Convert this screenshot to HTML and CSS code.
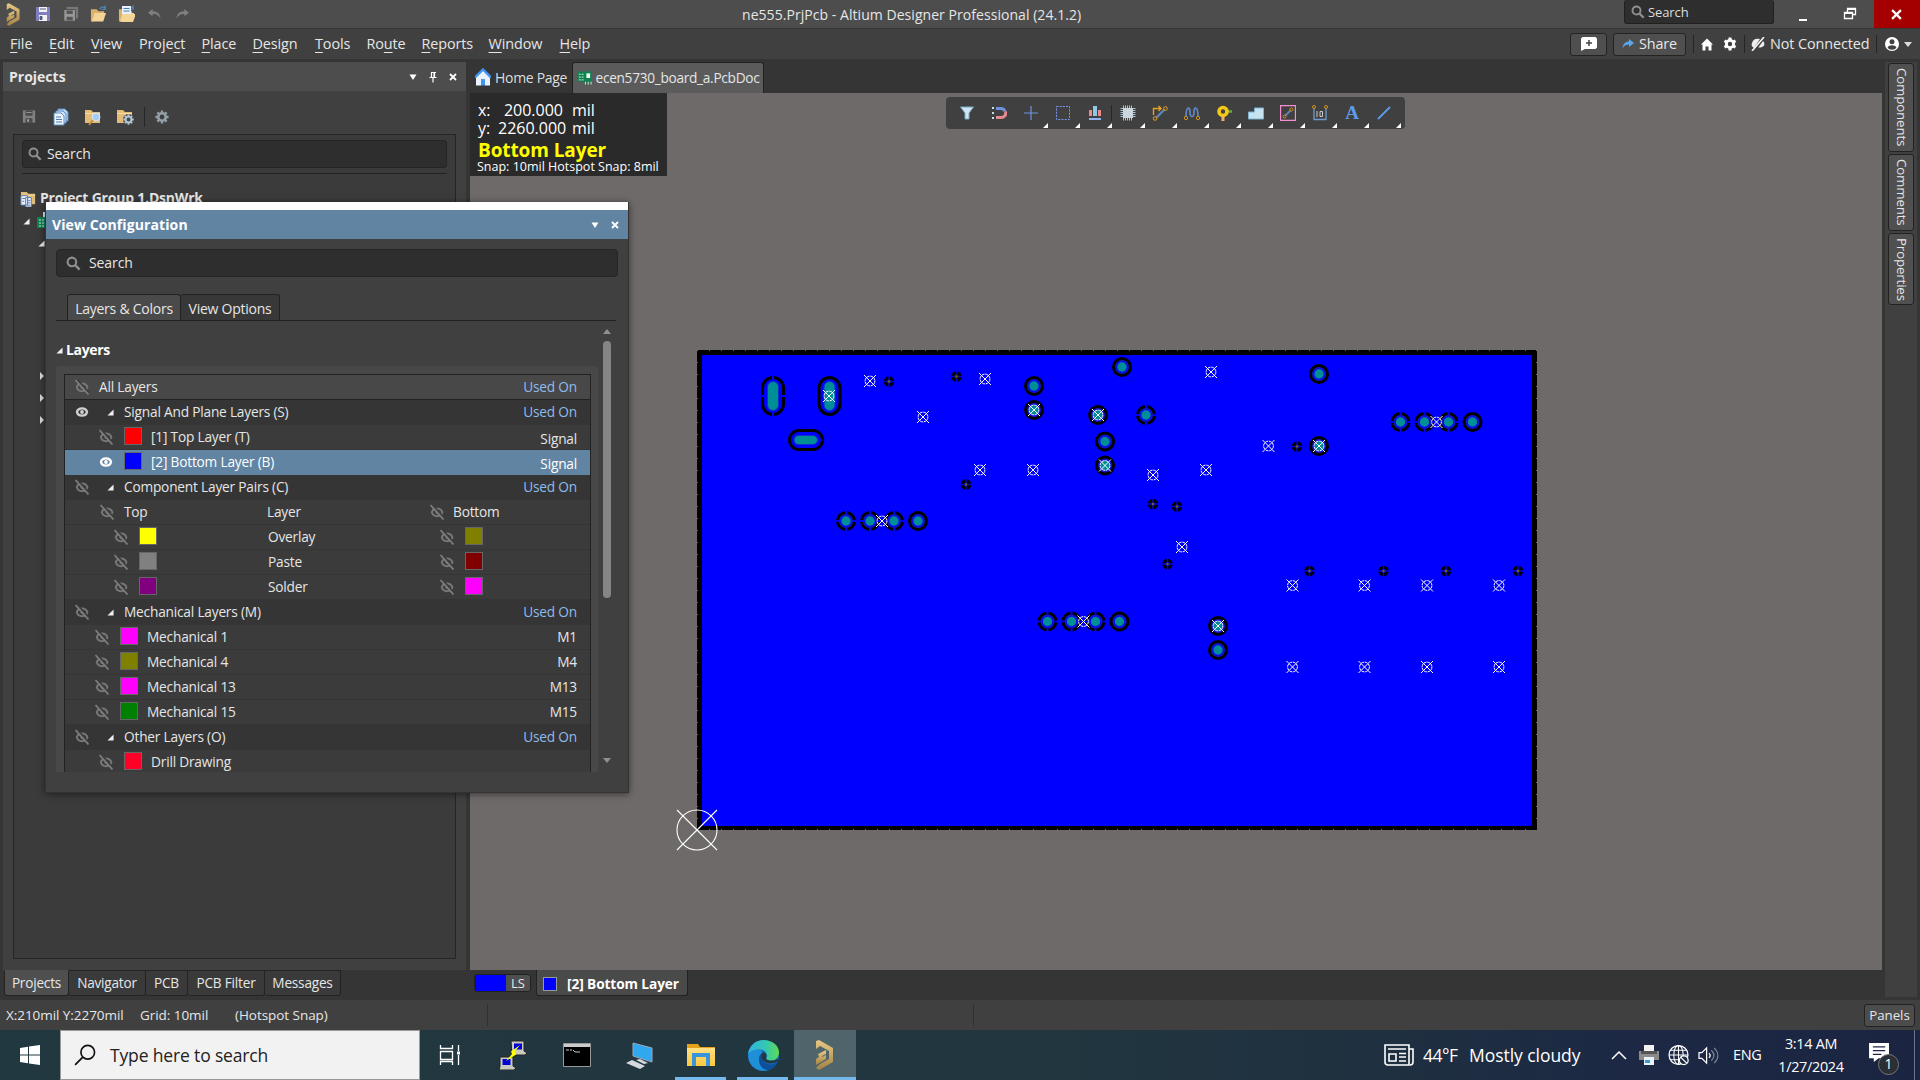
FILE: index.html
```html
<!DOCTYPE html>
<html lang="en">
<head>
<meta charset="utf-8">
<title>ne555.PrjPcb - Altium Designer Professional (24.1.2)</title>
<link rel="stylesheet" href="styles.css">
</head>
<body>
<svg class="defs" width="0" height="0">
  <defs>
    <linearGradient id="gold" x1="0" y1="0" x2="0" y2="1"><stop offset="0" stop-color="#e6c883"/><stop offset="1" stop-color="#a58344"/></linearGradient>
    <linearGradient id="edgeA" x1="0" y1="0" x2="1" y2="0"><stop offset="0" stop-color="#2fb4e0"/><stop offset=".6" stop-color="#35c8b0"/><stop offset="1" stop-color="#63dc4c"/></linearGradient>
    <linearGradient id="folderG" x1="0" y1="0" x2="0" y2="1"><stop offset="0" stop-color="#ffe084"/><stop offset="1" stop-color="#fcc83e"/></linearGradient>
    <symbol id="altium" viewBox="0 0 20 30"><path d="M1 1 4 0 18 8v14L4 30 1 28l4-4 9-5v-8L5 6 1 9z" fill="url(#gold)"/><path d="M3 14 11 10v4l-4 2v1l4-2v4L1 25v-6l3-2z" fill="url(#gold)"/></symbol>
    <symbol id="floppy" viewBox="0 0 16 16"><path d="M1 1h14v14H1z" fill="currentColor"/><path d="M4 1h8v5H4zM4 9h8v6H4z" fill="#f2f2f8"/><path d="M5 3h6M5 10.5h2v3H5z" stroke="#555a78" fill="#555a78"/></symbol>
    <symbol id="floppyoff" viewBox="0 0 16 16"><path d="M1 1h14v14H1z" fill="#808080"/><path d="M4 1h8v6H4zM4 10h8v5H4z" fill="#4a4a4a"/><path d="M5 3h6v1H5zM6 11h2v3H6z" fill="#aaa"/></symbol>
    <symbol id="folder" viewBox="0 0 18 18"><path d="M1 4h6l2 2h6v3H6l-3 8H1z" fill="#d9b26b"/><path d="M5 8h12l-3 9H2z" fill="#f5d596"/><path d="M10 4c2-3 4-3 6-1M16 0v4h-4" fill="none" stroke="#4b90c8" stroke-width="1.2"/></symbol>
    <symbol id="folderc" viewBox="0 0 18 18"><path d="M1 2h6l2 2h7v11H1z" fill="#e0bc78"/><path d="M1 5h15v1H1z" fill="#f7dca3"/></symbol>
    <symbol id="gear" viewBox="0 0 16 16"><path d="M8 .5V4m0 8v3.500M.5 8H4m8 0h3.500M2.700 2.700l2.400 2.400m5.800 5.800 2.400 2.400M13.300 2.700l-2.400 2.400m-5.800 5.800-2.400 2.400" stroke="currentColor" stroke-width="2.600"/><circle cx="8" cy="8" r="4.300" fill="none" stroke="currentColor" stroke-width="3"/></symbol>
    <symbol id="glass" viewBox="0 0 16 16"><circle cx="6.3" cy="6.3" r="4.6" fill="none" stroke="#8f8f8f" stroke-width="2.2"/><path d="m9.8 9.8 4.7 4.7" stroke="#8f8f8f" stroke-width="2.6"/></symbol>
    <symbol id="hid" viewBox="0 0 14 16"><path d="M1.800 8.300c1.500-5.200 9-5.200 10.600 0-1.600 5.200-9 5.200-10.600 0z" fill="none" stroke="#777" stroke-width="2"/><circle cx="7.500" cy="8.300" r="1.900" fill="#777"/><path d="M2 .5 14 14" stroke="#3b3b3b" stroke-width="2"/><path d="M.5 1 13.500 15.500" stroke="#7d7d7d" stroke-width="1.800"/></symbol>
    <symbol id="eye" viewBox="0 0 14 16"><path d="M2 8C3 3.200 11 3.200 12 8 11 12.800 3 12.800 2 8z" fill="none" stroke="currentColor" stroke-width="2.400"/><circle cx="7" cy="8" r="1.900" fill="currentColor"/></symbol>
    <symbol id="open" viewBox="0 0 8 8"><path d="M7.500.5v7h-7z" fill="#eee"/></symbol>
    <symbol id="closed" viewBox="0 0 6 10"><path d="M1 1v8l4-4z" fill="#ddd"/></symbol>
    <symbol id="pcb" viewBox="0 0 16 14"><path d="M0 0h16v11h-2v3h-1v-3h-2v3h-1v-3H0z" fill="#0d8350"/><path d="M2 3h2m-2 3h2m-2 3h2M5 3h2M5 6h2M5 9h2" stroke="#d7efe1" /><path d="M10 2h4v5h-4z" fill="#e8f5ee"/><path d="M9 11v3m3-3v3m3-3v3" stroke="#d7efe1"/></symbol>
    <symbol id="x" viewBox="0 0 10 10"><path d="m2 2 6 6m0-6-6 6" stroke="#fff" stroke-width="1.800"/></symbol>
    <symbol id="down" viewBox="0 0 10 10"><path d="M1.500 2.500h7L5 8z" fill="#fff"/></symbol>
    <g id="ring"><circle r="6.500" fill="none" stroke="#1515d0" stroke-width="2"/><circle r="8.500" fill="none" stroke="#000" stroke-width="3"/><circle r="4.700" fill="#008e96"/></g>
    <g id="therm"><use href="#ring"/><path d="M0-11v4M0 7v4M-11 0h4M7 0h4" stroke="#00f" stroke-width="2"/></g>
    <g id="mark"><path d="m-6-6 12 12M6-6-6 6" stroke="#fff" stroke-width="1"/><circle r="4.900" fill="none" stroke="#fff" stroke-width="1" stroke-dasharray="3 .8"/></g>
    <g id="via"><circle r="3.700" fill="none" stroke="#000" stroke-width="3.200"/><path d="M0-6v12M-6 0h12" stroke="#00f" stroke-width="1.300"/><path d="M-2.500 0h5M0-2.500v5" stroke="#223"/><path d="M-1-1h2v2h-2z" fill="#7a5a28"/></g>
  </defs>
</svg>

<header class="titlebar">
  <div class="quick">
    <svg class="q-logo"><use href="#altium"/></svg>
    <svg class="q-save"><use href="#floppy"/></svg>
    <svg class="q-all" viewBox="0 0 18 18"><path d="M4 1h13v13H4z" fill="#777"/><path d="M1 4h13v13H1z" fill="#999" stroke="#4c4c4c"/><path d="M4 5h7v4H4zM4 12h7v4H4z" fill="#555"/></svg>
    <svg class="q-open"><use href="#folder"/></svg>
    <svg class="q-open"><use href="#folder"/><path d="M4 1h9v8H4z" fill="#e8f0fa"/><path d="M5.500 3.500h6m-6 2.500h6" stroke="#4a7fb5"/><path d="M6 9h12l-3 8H3z" fill="#f5d596"/></svg>
    <svg class="q-undo" viewBox="0 0 16 14"><path d="M6 1 1 5l5 4V6.500c4-.5 6 1 8.500 5C14 6 11 3.500 6 3.500z" fill="#7f7f7f"/></svg>
    <svg class="q-undo" viewBox="0 0 16 14"><path d="m10 1 5 4-5 4V6.500c-4-.5-6 1-8.500 5C2 6 5 3.500 10 3.500z" fill="#7f7f7f"/></svg>
  </div>
  <div class="title">ne555.PrjPcb - Altium Designer Professional (24.1.2)</div>
  <div class="topsearch"><svg><use href="#glass"/></svg><span>Search</span></div>
  <div class="winbtns">
    <svg class="min" viewBox="0 0 10 10"><path d="M1 8h8" stroke="#fff" stroke-width="2"/></svg>
    <svg class="restore" viewBox="0 0 14 14"><path d="M4.500 5V1.500h8v6H9.500M1.500 5.500h8v6h-8z" fill="none" stroke="#fff" stroke-width="1.300"/><path d="M4 2h9M1 6h9" stroke="#fff" stroke-width="2"/></svg>
    <span class="close"><svg viewBox="0 0 10 10"><path d="m1 1 8 8m0-8L1 9" stroke="#fff" stroke-width="2"/></svg></span>
  </div>
</header>

<nav class="menubar">
  <div class="menus">
    <span class="m39"><u>F</u>ile</span><span class="m42"><u>E</u>dit</span><span class="m48"><u>V</u>iew</span><span class="m62">Proje<u>c</u>t</span><span class="m51"><u>P</u>lace</span><span class="m62"><u>D</u>esign</span><span class="m52"><u>T</u>ools</span><span class="m55">Ro<u>u</u>te</span><span class="m67"><u>R</u>eports</span><span class="m71"><u>W</u>indow</span><span><u>H</u>elp</span>
  </div>
  <div class="account">
    <span class="btn note"><svg viewBox="0 0 16 14"><path d="M1.500 0h13L16 1.500v9L14.500 12H4l-4 2V1.500z" fill="#fff"/><path d="M8 3v6M5 6h6" stroke="#444" stroke-width="1.500"/></svg></span>
    <span class="btn share"><svg viewBox="0 0 12 10"><path d="m7 0 5 4-5 4V5.500C4 5.300 2 6.500.5 9.500 1 5 3 2.800 7 2.500z" fill="#5aa9f0"/></svg>Share</span>
    <i></i>
    <svg class="home" viewBox="0 0 12 12"><path d="M6 0 0 6h1.500v6h3V8h3v4h3V6H12z" fill="#fff"/></svg>
    <svg class="cog" viewBox="0 0 14 14"><path d="M7 .5V3m0 8v2.500M1.500 3.700l2.200 1.300m6.600 4 2.200 1.300m0-6.600L10.300 5m-6.600 4-2.200 1.300" stroke="#fff" stroke-width="3"/><circle cx="7" cy="7" r="3.600" fill="none" stroke="#fff" stroke-width="2.800"/></svg>
    <i></i>
    <svg class="plug" viewBox="0 0 14 14"><path d="M1 6c1-4 4-5 8-4L3 11C1 10 0 8 1 6zM12 4c2 2 2 5-1 6-2 1-4 0-4 1z" fill="#eee"/><path d="M1 14 13 0" stroke="#fff" stroke-width="1.500"/></svg>
    <span class="conn">Not Connected</span>
    <i></i>
    <svg class="user" viewBox="0 0 14 14"><circle cx="7" cy="7" r="7" fill="#fff"/><circle cx="7" cy="4.800" r="2.500" fill="#404040"/><path d="M2.500 10.500c1.500-3 7.500-3 9 0-2 3-7 3-9 0z" fill="#404040"/></svg>
    <svg class="caret" viewBox="0 0 8 5"><path d="M0 0h8L4 5z" fill="#ddd"/></svg>
  </div>
</nav>

<main class="workspace">
  <section class="left">
    <div class="panel">
      <div class="panelhead"><b>Projects</b><svg><use href="#down"/></svg><svg viewBox="0 0 10 12"><path d="M3 1.500h5M3.500 1v5m3-5v5M1.500 6.500h7M5 7v4.500M6 1v5" stroke="#fff" stroke-width="1.200"/></svg><svg><use href="#x"/></svg></div>
      <div class="ptools">
        <svg class="pt1"><use href="#floppyoff"/></svg>
        <svg viewBox="0 0 18 18"><path d="M6 1h7l3 3v9H6z" fill="#b9d4f0" stroke="#5d8fc4"/><path d="M4 3h7l3 3v9H4z" fill="#cfe2f5" stroke="#5d8fc4"/><path d="M2 5h7l3 3v9H2z" fill="#eef5fc" stroke="#5d8fc4"/><path d="M4 9h5m-5 2.500h6M4 14h6" stroke="#4a7fb5"/></svg>
        <svg viewBox="0 0 18 18"><use href="#folderc"/><circle cx="12" cy="9" r="4" fill="#a8cdee" stroke="#d8e8f6"/><path d="m9 12-4 5" stroke="#c98a3c" stroke-width="2"/></svg>
        <svg viewBox="0 0 18 18"><use href="#folderc"/><circle cx="12.500" cy="11.500" r="5.500" fill="#404a50"/><g transform="translate(7 6) scale(.69)" color="#b4c4ce"><path d="M8 .5V4m0 8v3.500M.5 8H4m8 0h3.500M2.700 2.700l2.400 2.400m5.800 5.800 2.400 2.400M13.300 2.700l-2.400 2.400m-5.800 5.800-2.400 2.400" stroke="currentColor" stroke-width="2.600"/><circle cx="8" cy="8" r="4.300" fill="none" stroke="currentColor" stroke-width="3"/></g></svg>
        <i></i>
        <svg class="pt5"><use href="#gear"/></svg>
      </div>
      <div class="pbox">
        <div class="field"><svg><use href="#glass"/></svg><span>Search</span></div>
        <hr>
        <div class="tree">
          <div class="trow group"><svg viewBox="0 0 18 18"><use href="#folderc"/><path d="M1 6h7v10H1zM6 8h6v10H6z" fill="#e6eefa" stroke="#5779b0"/><path d="M2.500 9h3m-3 3h2M8 11h3m-3 2.500h3M8 16h3" stroke="#5779b0"/></svg><b>Project Group 1.DsnWrk</b></div>
          <div class="trow prj"><svg class="ar"><use href="#open"/></svg><svg class="pi" viewBox="0 0 16 18"><path d="M6 0h9v9H6z" fill="#dfe6f2"/><svg y="4" width="16" height="14"><use href="#pcb"/></svg></svg></div>
          <div class="trow sub"><svg class="ar"><use href="#open"/></svg></div>
          <div class="trow fold first"><svg><use href="#closed"/></svg></div>
          <div class="trow fold"><svg><use href="#closed"/></svg></div>
          <div class="trow fold"><svg><use href="#closed"/></svg></div>
        </div>
      </div>
    </div>
    <div class="ptabs"><span class="on t64">Projects</span><span class="t77">Navigator</span><span class="t42">PCB</span><span class="t77">PCB Filter</span><span class="t76">Messages</span></div>
  </section>

  <section class="center">
    <div class="dtabs">
      <span class="dhome"><svg viewBox="0 0 16 18"><path d="M8 1 1 9v8h5v-6h4v6h5V9z" fill="#e9f2fd"/><path d="m0 9 8-8 8 8" fill="none" stroke="#3f93f2" stroke-width="2.400"/><path d="M6 11h4v6H6z" fill="#3f93f2"/></svg>Home Page</span>
      <span class="ddoc"><svg><use href="#pcb"/></svg>ecen5730_board_a.PcbDoc</span>
    </div>
    <div class="canvas">
      <svg class="board" viewBox="470 93 1412 877">
        <path d="M697 350h840v480H697z"/>
        <path d="M702 355h830v471H702z" fill="#00f"/>
        <path d="M697 350.500h840M697 829.500h840M697.500 350v480M1536.500 350v480" stroke="#6e6a69" stroke-dasharray="1 11"/>
        <g fill="none" stroke="#000" stroke-width="3">
          <rect x="762.500" y="377.500" width="21" height="37" rx="10.500"/><rect x="819" y="377.500" width="21" height="37" rx="10.500"/><rect x="789.500" y="430.500" width="33" height="19" rx="9.500"/>
        </g>
        <path d="M773 374v6M773 412v6M760 396h6M780 396h6" stroke="#00f" stroke-width="2"/>
        <g fill="#008e96" stroke="#0a30c8"><rect x="767.500" y="381.500" width="11" height="29" rx="5.500"/><rect x="824" y="381.500" width="11" height="29" rx="5.500"/><rect x="794" y="435.500" width="23.500" height="9" rx="4.500"/></g>
        <use href="#ring" x="1034" y="386"/><use href="#ring" x="1034" y="410"/><use href="#ring" x="1098" y="415"/><use href="#ring" x="1105" y="441.500"/><use href="#ring" x="1105" y="465.500"/><use href="#ring" x="1122" y="367"/><use href="#ring" x="1319" y="374"/><use href="#ring" x="1319" y="446"/><use href="#ring" x="1218" y="626"/><use href="#ring" x="1218" y="650"/><use href="#ring" x="1472.500" y="422"/><use href="#ring" x="918" y="521"/><use href="#ring" x="1119.500" y="621.500"/>
        <use href="#therm" x="1146" y="415"/><use href="#therm" x="1400.500" y="422"/><use href="#therm" x="1424.500" y="422"/><use href="#therm" x="1448.500" y="422"/><use href="#therm" x="846" y="521"/><use href="#therm" x="870" y="521"/><use href="#therm" x="894" y="521"/><use href="#therm" x="1047.500" y="621.500"/><use href="#therm" x="1071.500" y="621.500"/><use href="#therm" x="1095.500" y="621.500"/>
        <use href="#mark" x="1034" y="410"/><use href="#mark" x="1098" y="415"/><use href="#mark" x="1105" y="465.500"/><use href="#mark" x="1319" y="446"/><use href="#mark" x="1218" y="626"/><use href="#mark" x="829" y="396"/><use href="#mark" x="1436.500" y="422"/><use href="#mark" x="882" y="521"/><use href="#mark" x="1083.500" y="621.500"/>
        <use href="#mark" x="870" y="381"/><use href="#mark" x="985" y="379"/><use href="#mark" x="923" y="417"/><use href="#mark" x="980" y="470"/><use href="#mark" x="1033" y="470"/><use href="#mark" x="1211" y="372"/><use href="#mark" x="1268.500" y="446"/><use href="#mark" x="1153" y="475"/><use href="#mark" x="1206" y="470"/><use href="#mark" x="1182" y="547"/>
        <use href="#mark" x="1292.500" y="585.500"/><use href="#mark" x="1364.500" y="585.500"/><use href="#mark" x="1427" y="585.500"/><use href="#mark" x="1499" y="585.500"/><use href="#mark" x="1292.500" y="667"/><use href="#mark" x="1364.500" y="667"/><use href="#mark" x="1427" y="667"/><use href="#mark" x="1499" y="667"/>
        <use href="#via" x="889" y="381.500"/><use href="#via" x="956.500" y="376.500"/><use href="#via" x="966" y="484.500"/><use href="#via" x="1297" y="446.500"/><use href="#via" x="1153" y="504"/><use href="#via" x="1177" y="506.500"/><use href="#via" x="1167.500" y="564"/><use href="#via" x="1309.500" y="571"/><use href="#via" x="1383.500" y="571"/><use href="#via" x="1446" y="571"/><use href="#via" x="1518" y="571"/>
        <g fill="none" stroke="#fff" stroke-width="1.100"><circle cx="697" cy="830" r="20"/><path d="m677 810 40 40m0-40-40 40"/></g>
      </svg>
      <div class="hud">
        <div class="co"><span>x:</span><span class="num">200.000</span><span>mil</span></div>
        <div class="co"><span>y:</span><span class="num">2260.000</span><span>mil</span></div>
        <b>Bottom Layer</b>
        <div class="snap">Snap: 10mil Hotspot Snap: 8mil</div>
      </div>
      <div class="tools">
        <span class="nt"><svg viewBox="0 0 16 16"><path d="M1.500 2h13L10 8v6H6V8z" fill="#cfe6f2" stroke="#7ba6c0"/></svg></span>
        <span class="nt"><svg viewBox="0 0 16 16"><path d="M5 3.500h5a4.500 4.500 0 0 1 4 3" fill="none" stroke="#6f8fe0" stroke-width="3"/><path d="M14.500 6.500c1 3-1 6-4.500 6H5" fill="none" stroke="#e88890" stroke-width="3"/><path d="M2 2v2m0 3v2m0 3v2" stroke="#bfe0e8" stroke-width="2"/></svg></span>
        <span><svg viewBox="0 0 16 16"><path d="M8 1v14M1 8h14" stroke="#6f93e0" stroke-width="1.200"/></svg></span>
        <span><svg viewBox="0 0 16 16"><path d="M1.500 1.500h13v13h-13z" fill="none" stroke="#7a96ee" stroke-dasharray="2 1.200"/></svg></span>
        <span><svg viewBox="0 0 16 16"><path d="M2 5h3v6H2zM11 5h3v6h-3z" fill="#f08888"/><path d="M6 1h4v10H6z" fill="#8cc8e8"/><path d="M2 14h12" stroke="#8fb4ee" stroke-width="2"/></svg></span>
        <i></i>
        <span><svg viewBox="0 0 16 16"><path d="M.5 3.500h15M.5 5.500h15M.5 7.500h15M.5 9.500h15M.5 11.500h15M3.500.5v15M5.500.5v15M7.500.5v15M9.500.5v15M11.500.5v15" stroke="#a8c4d8"/><path d="M3 3h10v10H3z" fill="#ccd6dc"/></svg></span>
        <span><svg viewBox="0 0 16 16"><path d="m4 13 9-9" stroke="#5c84b8" stroke-width="2.400"/><path d="M1.500 10V3.500H9M6.500 1 9 3.500 6.500 6" fill="none" stroke="#e8a21c" stroke-width="1.400"/><circle cx="3" cy="13.500" r="1.800" fill="#404040" stroke="#e8a21c"/><circle cx="13.500" cy="3.500" r="1.800" fill="#404040" stroke="#e8a21c"/></svg></span>
        <span><svg viewBox="0 0 16 16"><path d="M2 12C2 1 6 1 6 7s4 6 4 0 4-6 4 5" fill="none" stroke="#6088c8" stroke-width="1.700"/><circle cx="2" cy="13" r="1.700" fill="#404040" stroke="#d0941c"/><circle cx="14" cy="13" r="1.700" fill="#404040" stroke="#d0941c"/></svg></span>
        <span><svg viewBox="0 0 16 16"><path d="M7 8v8" stroke="#f0b070" stroke-width="3"/><path d="M10 6.500h6" stroke="#58b040" stroke-width="2.500"/><circle cx="7" cy="6.500" r="4" fill="#404040" stroke="#f5c818" stroke-width="3.600"/></svg></span>
        <span><svg viewBox="0 0 16 16"><path d="M.5 14V7h6V3h9v11z" fill="#c5e4f0" stroke="#7fb2d4"/></svg></span>
        <span><svg viewBox="0 0 16 16"><path d="M.5.500h15v15H.5z" fill="none" stroke="#f090d0" stroke-width="1.300"/><path d="m5 11 6-6" stroke="#5c84b8" stroke-width="1.800"/><circle cx="4.500" cy="11.500" r="1.500" fill="#404040" stroke="#d0941c"/><circle cx="11.500" cy="4.500" r="1.500" fill="#404040" stroke="#d0941c"/></svg></span>
        <span><svg viewBox="0 0 16 16"><path d="M2 3v11.500h12V3" fill="none" stroke="#6f9ad0" stroke-width="1.300"/><circle cx="2" cy="2" r="1.500" fill="#404040" stroke="#d0941c"/><circle cx="14" cy="2" r="1.500" fill="#404040" stroke="#d0941c"/><path d="M5 6v6M8 6.500h2.500v5H8z" fill="none" stroke="#c8c8c8"/></svg></span>
        <span class="ta"><b>A</b></span>
        <span><svg viewBox="0 0 16 16"><path d="M2 14 14 2" stroke="#5c9ce8" stroke-width="1.800"/></svg></span>
      </div>
    </div>
    <div class="ltabs"><span class="ls"><em></em>LS</span><span class="lb"><em></em><b>[2] Bottom Layer</b></span></div>
  </section>

  <aside class="dock"><span class="d89">Components</span><span class="d77">Comments</span><span class="d72">Properties</span></aside>
</main>

<footer class="status">
  <span class="s1">X:210mil Y:2270mil</span><span class="s2">Grid: 10mil</span><span class="s3">(Hotspot Snap)</span><i class="s4"></i><i class="s5"></i><span class="panels">Panels</span>
</footer>

<section class="taskbar">
  <span class="start"><svg viewBox="0 0 20 20"><path d="m0 3 8-1.200V9.500H0zM9 1.600 20 0v9.500H9zM0 10.500h8v7.700L0 17zM9 10.500h11V20L9 18.400z" fill="#fff"/></svg></span>
  <span class="tsearch"><svg viewBox="0 0 20 20"><circle cx="12.500" cy="7.500" r="6.200" fill="none" stroke="#111" stroke-width="1.500"/><path d="M8 12 1 19" stroke="#111" stroke-width="1.600"/></svg>Type here to search</span>
  <span class="tb w61"><svg width="22" height="22" viewBox="0 0 22 22"><path d="M1.500 1v3.500h12V1M1.500 21v-3.500h12V21M1.500 7.500h12v8h-12zM19.500 1v6m0 4v10" fill="none" stroke="#fff" stroke-width="1.300"/><path d="M18 7.500h3v3h-3z" fill="#fff"/></svg></span>
  <span class="tb w64"><svg width="30" height="30" viewBox="0 0 30 30"><path d="M13 1h13v10l3 2-2 2H14zM2 17h13v9l3 2-2 2H1l1-4z" fill="#c9c9c0" stroke="#222"/><path d="M16 3.500h8v6h-8zM4.500 19h8v6h-8z" fill="#0000d8"/><path d="m22 5-9 6.500 1 2.500-6 7 10-6.500-1-3z" fill="#ff0"/></svg></span>
  <span class="tb"><svg width="28" height="24" viewBox="0 0 28 24"><path d="M.5.500h27v23H.5z" fill="#000" stroke="#999"/><path d="M1 1h26v3H1z" fill="#ccc"/><path d="M3 7h3m1 0h2m1 0 2 2h5" stroke="#ccc" fill="none"/></svg></span>
  <span class="tb"><svg width="28" height="28" viewBox="0 0 28 28"><path d="m8 2 19 5v14L8 15z" fill="#30a8f0" stroke="#9ab"/><path d="m15 18 8 4-4 1-8-4zM1 22l6-3 13 6-5 3z" fill="#d5dade"/></svg></span>
  <span class="tb run"><svg width="28" height="24" viewBox="0 0 28 24"><path d="M0 1h11l2 3h15v19H0z" fill="#e8a21a"/><path d="M0 5h28v18H0z" fill="url(#folderG)"/><path d="M7 23V12h14v11" fill="none" stroke="#3a94dc" stroke-width="4"/></svg></span>
  <span class="tb run"><svg width="31" height="31" viewBox="0 0 30 30"><circle cx="15" cy="15" r="15" fill="#1467b8"/><path d="M0 14C1 5 8 0 15 0c8 0 15 5 15 12 0 5-4 8-8 8-3 0-5-1-4-3C20 9 8 6 0 14z" fill="url(#edgeA)"/><path d="M0 14c5-7 14-5 14-2-3 2-4 5-3 9 1 4 5 7 9 8C9 32 0 25 0 14z" fill="#1f8fd8"/><path d="M14 12c-2 3-1 9 4 11 4 2 8 0 11-2-2 4-5 7-9 8-8 1-13-11-6-17z" fill="#0e4f9c"/><path d="M14.500 12c-2 2-2 6 .5 8 4 3.500 10 3 14 .6v-2.200C26 20 22 20.500 18.500 19c-2-1-.5-2-.5-4 0-1.500-1.500-3-3.500-3z" fill="#23383f"/></svg></span>
  <span class="tb run act"><svg width="22" height="30"><use href="#altium"/></svg></span>
  <div class="tray">
    <svg class="news" viewBox="0 0 30 22"><path d="M1 1h24v20H4c-2 0-3-1-3-3zM25 5h4v13c0 2-1 3-3 3" fill="none" stroke="#fff" stroke-width="1.600"/><path d="M4 5h18M15 9.500h7M15 13h7M15 17h7M5 10h7v7H5z" fill="none" stroke="#fff" stroke-width="1.600"/></svg>
    <span class="temp">44°F</span><span class="sky">Mostly cloudy</span>
    <svg class="chev" viewBox="0 0 16 10"><path d="m1 9 7-7 7 7" fill="none" stroke="#fff" stroke-width="1.500"/></svg>
    <svg class="prn" viewBox="0 0 20 20"><path d="M5 0h10v6H5z" fill="#f2f2f2"/><path d="M0 6h20v9H0z" fill="#8b8b8b"/><path d="M2 6h16v3H2z" fill="#555"/><path d="M5 12h10v8H5z" fill="#e8f4fa"/><path d="M6 15h5v3H6z" fill="#3d9ad0"/></svg>
    <svg class="globe" viewBox="0 0 20 20"><circle cx="10" cy="10" r="9" fill="none" stroke="#fff" stroke-width="1.200"/><ellipse cx="10" cy="10" rx="4.500" ry="9" fill="none" stroke="#fff"/><path d="M1 10h18M2.500 5.500h15M2.500 14.500h15M10 1v18" stroke="#fff"/><circle cx="15" cy="15" r="4.200" fill="#1d2a42" stroke="#fff" stroke-width="1.200"/><path d="m12 12 6 6" stroke="#fff" stroke-width="1.200"/></svg>
    <svg class="spk" viewBox="0 0 22 20"><path d="M1 7h3l5-5v16l-5-5H1z" fill="none" stroke="#fff" stroke-width="1.300"/><path d="M11.500 7.500c1.500 1.500 1.500 3.500 0 5" fill="none" stroke="#fff" stroke-width="1.300"/><path d="M14 4.500c3.500 3.500 3.500 7.500 0 11M17 2c5 5 5 11 0 16" fill="none" stroke="#7c8596" stroke-width="1.300"/></svg>
    <span class="eng">ENG</span>
    <span class="clock"><span>3:14 AM</span><span>1/27/2024</span></span>
    <span class="notif"><svg viewBox="0 0 22 20"><path d="M0 0h21v16H10l-5 4v-4H0z" fill="#fff"/><path d="M4 4h13M4 8h13M4 12h9" stroke="#1c2843" stroke-width="1.300"/></svg><em>1</em></span>
    <i></i>
  </div>
</section>

<section class="dialog">
  <div class="strip"></div>
  <div class="dhead"><b>View Configuration</b><svg><use href="#down"/></svg><svg><use href="#x"/></svg></div>
  <div class="dfield"><svg><use href="#glass"/></svg><span>Search</span></div>
  <div class="vtabs"><span class="on">Layers &amp; Colors</span><span>View Options</span></div>
  <div class="dbody">
    <div class="dmain">
      <div class="sect"><svg><use href="#open"/></svg><b>Layers</b></div>
      <div class="gbox"><div class="table">
        <div class="r all"><svg class="e"><use href="#hid"/></svg><span>All Layers</span><a>Used On</a></div>
        <div class="r g"><svg class="e dim"><use href="#eye"/></svg><svg class="t"><use href="#open"/></svg><span>Signal And Plane Layers (S)</span><a>Used On</a></div>
        <div class="r l"><svg class="e"><use href="#hid"/></svg><em class="red"></em><span>[1] Top Layer (T)</span><q>Signal</q></div>
        <div class="r l sel"><svg class="e"><use href="#eye"/></svg><em class="blue"></em><span>[2] Bottom Layer (B)</span><q>Signal</q></div>
        <div class="r g"><svg class="e"><use href="#hid"/></svg><svg class="t"><use href="#open"/></svg><span>Component Layer Pairs (C)</span><a>Used On</a></div>
        <div class="r p ph"><svg class="e"><use href="#hid"/></svg><span class="c1">Top</span><span class="c2">Layer</span><svg class="e"><use href="#hid"/></svg><span>Bottom</span></div>
        <div class="r p"><svg class="e"><use href="#hid"/></svg><em class="yellow"></em><span class="c3">Overlay</span><svg class="e"><use href="#hid"/></svg><em class="olive"></em></div>
        <div class="r p"><svg class="e"><use href="#hid"/></svg><em class="gray"></em><span class="c3">Paste</span><svg class="e"><use href="#hid"/></svg><em class="maroon"></em></div>
        <div class="r p"><svg class="e"><use href="#hid"/></svg><em class="purple"></em><span class="c3">Solder</span><svg class="e"><use href="#hid"/></svg><em class="magenta"></em></div>
        <div class="r g"><svg class="e"><use href="#hid"/></svg><svg class="t"><use href="#open"/></svg><span>Mechanical Layers (M)</span><a>Used On</a></div>
        <div class="r m"><svg class="e"><use href="#hid"/></svg><em class="magenta"></em><span>Mechanical 1</span><q>M1</q></div>
        <div class="r m"><svg class="e"><use href="#hid"/></svg><em class="olive"></em><span>Mechanical 4</span><q>M4</q></div>
        <div class="r m"><svg class="e"><use href="#hid"/></svg><em class="magenta"></em><span>Mechanical 13</span><q>M13</q></div>
        <div class="r m"><svg class="e"><use href="#hid"/></svg><em class="green"></em><span>Mechanical 15</span><q>M15</q></div>
        <div class="r g"><svg class="e"><use href="#hid"/></svg><svg class="t"><use href="#open"/></svg><span>Other Layers (O)</span><a>Used On</a></div>
        <div class="r l"><svg class="e"><use href="#hid"/></svg><em class="crimson"></em><span>Drill Drawing</span></div>
      </div></div>
    </div>
    <div class="scroll"><svg viewBox="0 0 8 5"><path d="M0 5h8L4 0z" fill="#909090"/></svg><span></span><svg class="sd" viewBox="0 0 8 5"><path d="M0 0h8L4 5z" fill="#909090"/></svg></div>
  </div>
</section>
</body>
</html>
```
FILE: styles.css
```css
* { box-sizing: border-box; }
body { margin: 0; width: 1920px; height: 1080px; overflow: hidden; display: flex; flex-direction: column; background: #353535; color: #e6e6e6; font: 14px/20px "Open Sans", "Noto Sans", sans-serif; letter-spacing: -0.1px; white-space: nowrap; }
svg { display: block; flex: none; width: 16px; height: 16px; }
.defs { position: absolute; width: 0; height: 0; }
i { flex: none; width: 1px; height: 18px; background: #252525; }

/* title bar */
.titlebar { height: 29px; display: flex; background: #4d4d4d; border-bottom: 1px solid #363636; flex: none; }
.quick { display: flex; align-items: center; width: 742px; padding-left: 6px; }
.q-logo { width: 15px; height: 23px; margin-right: 14px; }
.q-save { color: #8080c0; margin-right: 12px; }
.q-all { margin-right: 11px; }
.q-open { width: 17px; height: 18px; margin-right: 11px; }
.q-undo { margin: 0 12px 0 1px; height: 13px; width: 15px; }
.title { width: 882px; padding-top: 5px; letter-spacing: .05px; }
.topsearch { width: 150px; height: 24px; display: flex; align-items: center; gap: 3px; padding-left: 6px; background: #2e2e2e; border: 1px solid #202020; border-top: 0; border-radius: 3px; font-size: 13px; color: #ddd; }
.topsearch svg { width: 14px; height: 14px; }
.winbtns { flex: 1; display: flex; align-items: center; }
.min { width: 10px; height: 10px; margin: 6px 0 0 24px; }
.restore { width: 14px; height: 14px; margin-left: 35px; }
.close { width: 46px; height: 28px; margin-left: 17px; background: #a50000; display: flex; align-items: center; justify-content: center; padding-right: 2px; }
.close svg { width: 11px; height: 11px; }

/* menu bar */
.menubar { height: 30px; flex: none; background: #404040; display: flex; justify-content: space-between; align-items: center; }
.menus { display: flex; padding-left: 10px; font-size: 14.400px; }
.menus u { text-underline-offset: 3px; text-decoration-thickness: 1px; }
.m39 { width: 39px; } .m42 { width: 42px; } .m48 { width: 48px; } .m62 { width: 62.500px; } .m51 { width: 51px; } .m52 { width: 51.500px; } .m55 { width: 55px; } .m67 { width: 67px; } .m71 { width: 71px; }
.account { width: 350px; display: flex; align-items: center; font-size: 14.400px; }
.btn { height: 23px; background: #4f4f4f; border: 1px solid #232323; border-radius: 3px; display: flex; align-items: center; justify-content: center; }
.note { width: 37px; }
.note svg { width: 16px; height: 14px; }
.share { width: 73px; margin: 0 7px 0 6px; gap: 5px; }
.share svg { width: 12px; height: 10px; }
.home { width: 12px; height: 13px; margin: 0 10px 0 7px; }
.cog { width: 14px; height: 14px; margin-right: 7px; }
.plug { width: 14px; height: 14px; margin: 0 5px 0 6px; }
.conn { width: 106px; }
.user { width: 14px; height: 14px; margin: 0 5px 0 8px; }
.caret { width: 8px; height: 5px; }

/* workspace */
.workspace { height: 941px; flex: none; display: flex; padding-top: 3px; }
.left { width: 467px; padding-left: 3px; }
.panel { width: 463px; height: 908px; background: #404040; display: flex; flex-direction: column; }
.panelhead { height: 29px; display: flex; align-items: center; background: #4d4d4d; padding: 0 8px 0 6px; gap: 10px; }
.panelhead b { flex: 1; letter-spacing: 0; }
.panelhead svg { width: 10px; height: 10px; }
.panelhead svg:nth-child(3) { height: 12px; }
.ptools { height: 43px; display: flex; align-items: center; padding: 8px 0 0 18px; }
.ptools svg { width: 18px; height: 18px; margin-right: 14px; }
.ptools .pt1 { width: 14px; margin: 0 16px 0 1px; height: 15px; }
.ptools i { height: 20px; margin: 0 10px 0 -4px; }
.ptools .pt5 { width: 14px; height: 14px; color: #93a0a8; }
.pbox { width: 443px; height: 825px; margin-left: 10px; border: 1px solid #252525; background: #3b3b3b; padding: 5px 8px; }
.field { height: 28px; display: flex; align-items: center; gap: 5px; padding: 0 0 1px 5px; background: #2e2e2e; border: 1px solid #252525; border-radius: 3px; }
.field svg { width: 14px; height: 14px; }
.pbox hr { margin: 5px 0 13px; border: 0; height: 1px; background: #222; }
.tree { display: flex; flex-direction: column; }
.trow { display: flex; align-items: center; height: 22px; }
.group { margin: 0 0 0 -2px; gap: 3px; letter-spacing: -.2px; }
.group svg { width: 17px; height: 17px; }
.prj { padding-left: 1px; height: 24px; gap: 7px; }
.ar { width: 7px; height: 7px; }
.pi { width: 16px; height: 18px; }
.sub { padding-left: 16px; height: 21px; }
.fold { padding-left: 17px; }
.fold svg { width: 6px; height: 10px; }
.first { margin-top: 111px; }
.ptabs { display: flex; height: 26px; padding-left: 1px; font-size: 13.600px; letter-spacing: -.2px; }
.ptabs span { height: 26px; background: #3a3a3a; border: 1px solid #232323; border-left: 0; border-radius: 0 0 3px 3px; text-align: center; line-height: 24px; }
.ptabs .on { background: #4f4f4f; border-top-color: #4f4f4f; border-left: 1px solid #232323; }
.t64 { width: 65px; } .t77 { width: 77px; } .t42 { width: 42px; } .t76 { width: 76px; }

.center { width: 1415px; padding-left: 3px; display: flex; flex-direction: column; }
.dtabs { height: 31px; display: flex; padding-left: 5px; }
.dtabs span { display: flex; align-items: center; }
.dhome { width: 96.500px; gap: 4px; color: #ddd; letter-spacing: -.3px; }
.dhome svg { width: 16px; height: 19px; }
.ddoc { width: 192px; height: 31px; background: #5b5b5b; border: 1px solid #222; border-bottom: 0; border-radius: 3px 3px 0 0; gap: 4px; padding-left: 4px; font-size: 13.700px; letter-spacing: -.3px; }
.ddoc svg { width: 15px; height: 14px; }
.canvas { height: 877px; position: relative; background: #6e6a69; }
.board { width: 1412px; height: 877px; }
.hud { position: absolute; left: 0; top: 0; width: 197px; height: 83px; background: #2a2a2a; color: #fff; padding: 8px 0 0 8px; font-size: 16px; line-height: 18px; }
.co { display: flex; height: 18px; }
.co span:first-child { width: 20px; }
.co .num { width: 65px; text-align: right; margin-right: 9px; letter-spacing: 0; }
.hud b { display: block; color: #ff0; font-size: 19px; line-height: 22px; margin-top: 2px; letter-spacing: -.1px; }
.snap { font-size: 12.500px; line-height: 13px; margin: -1px 0 0 -1px; letter-spacing: 0; }
.tools { position: absolute; left: 476px; top: 4px; width: 459px; height: 32px; background: #404040; border-radius: 4px; display: flex; padding: 0 4px 0 5px; align-items: center; }
.tools span { width: 32px; height: 32px; display: flex; align-items: center; justify-content: center; position: relative; }
.tools span::after { content: ""; position: absolute; right: -1px; bottom: 1px; border-left: 5px solid transparent; border-bottom: 5px solid #fff; }
.tools .nt::after { display: none; }
.tools i { height: 16px; margin: 0; }
.ta b { font: bold 19px/20px "Liberation Serif", serif; color: #5c9ce8; }
.ltabs { display: flex; height: 27px; padding-left: 4px; align-items: flex-start; }
.ls { width: 57px; height: 18px; margin-top: 4px; border: 1px solid #222; background: #4f4f4f; border-radius: 3px; display: flex; align-items: center; gap: 5px; font-size: 13px; }
.ls em { width: 31px; height: 16px; background: #00f; }
.lb { width: 152px; height: 26px; margin-left: 5px; background: #4a4a4a; border: 1px solid #222; border-top: 0; border-radius: 0 0 3px 3px; display: flex; align-items: center; gap: 10px; padding: 2px 0 0 6px; color: #fff; font-size: 13.700px; letter-spacing: -.1px; }
.lb em { width: 14px; height: 14px; background: #00f; border: 1px solid #999; }

.dock { width: 32px; margin-left: 3px; height: 935px; background: #404040; display: flex; flex-direction: column; align-items: center; gap: 2px; padding-top: 1px; }
.dock span { width: 26px; background: #505050; border: 1px solid #222; border-radius: 3px; writing-mode: vertical-rl; text-align: center; line-height: 23px; font-size: 13.300px; letter-spacing: -.15px; }
.d89 { height: 89px; } .d77 { height: 77px; } .d72 { height: 72px; }

/* status bar */
.status { height: 30px; flex: none; background: #404040; display: flex; align-items: center; padding: 0 4px 0 6px; font-size: 13.500px; letter-spacing: -.05px; }
.s1 { width: 134px; } .s2 { width: 95px; } .s3 { width: 252px; }
.s5 { margin: 0 890px 0 485px; }
.status i { height: 22px; background: #303030; }
.panels { width: 51px; height: 23px; border: 1px solid #222; border-radius: 3px; background: #4c4c4c; text-align: center; line-height: 21px; font-size: 13.300px; }

/* taskbar */
.taskbar { height: 50px; flex: none; display: flex; background: linear-gradient(90deg, #223841, #21363f 55%, #1f3040 72%, #1c2844 85%, #1b2542); color: #fff; }
.start { width: 60px; padding: 15px 20px; }
.start svg { width: 20px; height: 20px; }
.tsearch { width: 360px; background: #f2f2f2; border: 1px solid #999; color: #222; display: flex; align-items: center; gap: 14px; padding-left: 13px; font-size: 17.500px; letter-spacing: -.15px; }
.tsearch svg { width: 22px; height: 22px; }
.tb { width: 62px; display: flex; align-items: center; justify-content: center; }
.w61 { width: 60px; }
.w64 { width: 66px; }
.tb svg { width: auto; height: auto; }
.run { position: relative; }
.run::after { content: ""; position: absolute; left: 5px; right: 6px; bottom: 0; height: 3px; background: #76b9ed; }
.act { background: #50646c; }
.act::after { left: 0; right: 0; }
.tray { flex: 1; display: flex; align-items: center; justify-content: flex-end; padding-right: 5px; }
.news { width: 30px; height: 22px; margin-right: 9px; }
.temp { width: 46px; font-size: 17.500px; letter-spacing: -.5px; }
.sky { width: 142px; font-size: 17.500px; letter-spacing: -.05px; }
.chev { width: 16px; height: 10px; margin-right: 12px; }
.prn { width: 20px; height: 20px; margin-right: 9px; }
.globe { width: 21px; height: 22px; margin-right: 9px; }
.spk { width: 21px; height: 19px; margin-right: 14px; }
.eng { width: 44px; font-size: 14.500px; letter-spacing: -.3px; }
.clock { width: 68px; display: flex; flex-direction: column; align-items: center; font-size: 14.400px; line-height: 23px; letter-spacing: -.3px; }
.notif { position: relative; width: 45px; margin-left: 24px; padding-top: 0; }
.notif svg { width: 21px; height: 19px; margin-top: -6px; }
.notif em { position: absolute; left: 9px; top: 5px; width: 21px; height: 21px; border: 1px solid #777; border-radius: 50%; background: #2a2e35; font: 14px/18px "Open Sans", sans-serif; text-align: center; }
.tray i { height: 50px; background: #6a7388; }

/* floating layer dialog */
.dialog { position: absolute; left: 45px; top: 202px; width: 584px; height: 591px; background: #404040; border: 1px solid #333; border-top: 0; display: flex; flex-direction: column; box-shadow: 0 1px 7px rgba(0,0,0,.5); }
.strip { height: 8px; background: #fff; flex: none; }
.dhead { height: 29px; flex: none; background: #6284a3; color: #fff; display: flex; align-items: center; padding: 0 8px 0 6px; gap: 10px; }
.dhead b { flex: 1; letter-spacing: .1px; }
.dhead svg { width: 10px; height: 10px; }
.dfield { flex: none; height: 28px; width: 562px; margin: 10px 0 0 10px; background: #2e2e2e; border: 1px solid #252525; border-radius: 4px; display: flex; align-items: center; gap: 8px; padding-left: 9px; }
.dfield svg { width: 15px; height: 15px; }
.vtabs { flex: none; display: flex; width: 560px; margin: 17px 0 0 10px; padding-left: 11px; height: 27px; border-bottom: 1px solid #222; }
.vtabs span { width: 99px; background: #383838; border: 1px solid #222; border-left: 0; border-bottom: 0; border-radius: 3px 3px 0 0; text-align: center; line-height: 27px; letter-spacing: -.25px; }
.vtabs .on { width: 114px; background: #4a4a4a; border-left: 1px solid #222; }
.dbody { display: flex; margin-left: 10px; height: 451px; }
.dmain { width: 542px; }
.sect { height: 45px; padding-top: 13px; display: flex; gap: 3px; align-items: center; color: #fff; letter-spacing: -.35px; }
.sect svg { width: 7px; height: 7px; }
.gbox { height: 406px; background: #484848; border-radius: 3px 3px 0 0; padding: 8px 7px 0 8px; overflow: hidden; }
.table { border: 1px solid #222; border-bottom: 0; background: #3b3b3b; height: 398px; overflow: hidden; }
.r { height: 25px; display: flex; align-items: center; border-bottom: 1px solid #353535; padding-right: 13px; letter-spacing: -.2px; font-size: 13.700px; }
.r a, .r q { margin-left: auto; quotes: none; }
.r q { padding-top: 3px; }
.r a { color: #8dbbee; }
.all { background: #484848; border-bottom-color: #222; }
.g { background: #353535; }
.e { width: 14px; height: 16px; color: #fff; }
.dim { color: #d0d0d0; }
.all, .g { padding-left: 10px; }
.all .e { margin-right: 10px; }
.g .e { margin-right: 18px; }
.t { width: 7px; height: 7px; margin-right: 10px; }
.r em { width: 18px; height: 18px; border: 1px solid #666; margin-top: -2px; flex: none; }
.l { padding-left: 34px; }
.l em { margin: -2px 9px 0 11px; }
.sel { background: #6284a3; border-color: #6284a3; color: #fff; }
.p { padding-left: 49px; }
.p em { margin-left: 11px; }
.c3 { width: 172px; margin-left: 111px; padding-right: 0; }
.ph { padding-left: 35px; }
.c1 { margin-left: 10px; width: 143px; }
.c2 { width: 163px; }
.ph .e + span:last-child { margin-left: 9px; }
.m { padding-left: 30px; }
.m em { margin: -2px 9px 0 11px; }
.m q { padding-top: 0; }
.red { background: #f00; } .blue { background: #00f; } .yellow { background: #ff0; } .olive { background: #808000; } .gray { background: #808080; } .maroon { background: #800000; } .purple { background: #800080; } .magenta { background: #f0f; } .green { background: #008000; } .crimson { background: #ff0026; }
.scroll { width: 8px; margin-left: 5px; display: flex; flex-direction: column; padding-top: 8px; }
.scroll svg { width: 8px; height: 5px; }
.scroll span { height: 257px; margin-top: 7px; border-radius: 4px; background: #858585; }
.scroll .sd { margin-top: 160px; }
```
